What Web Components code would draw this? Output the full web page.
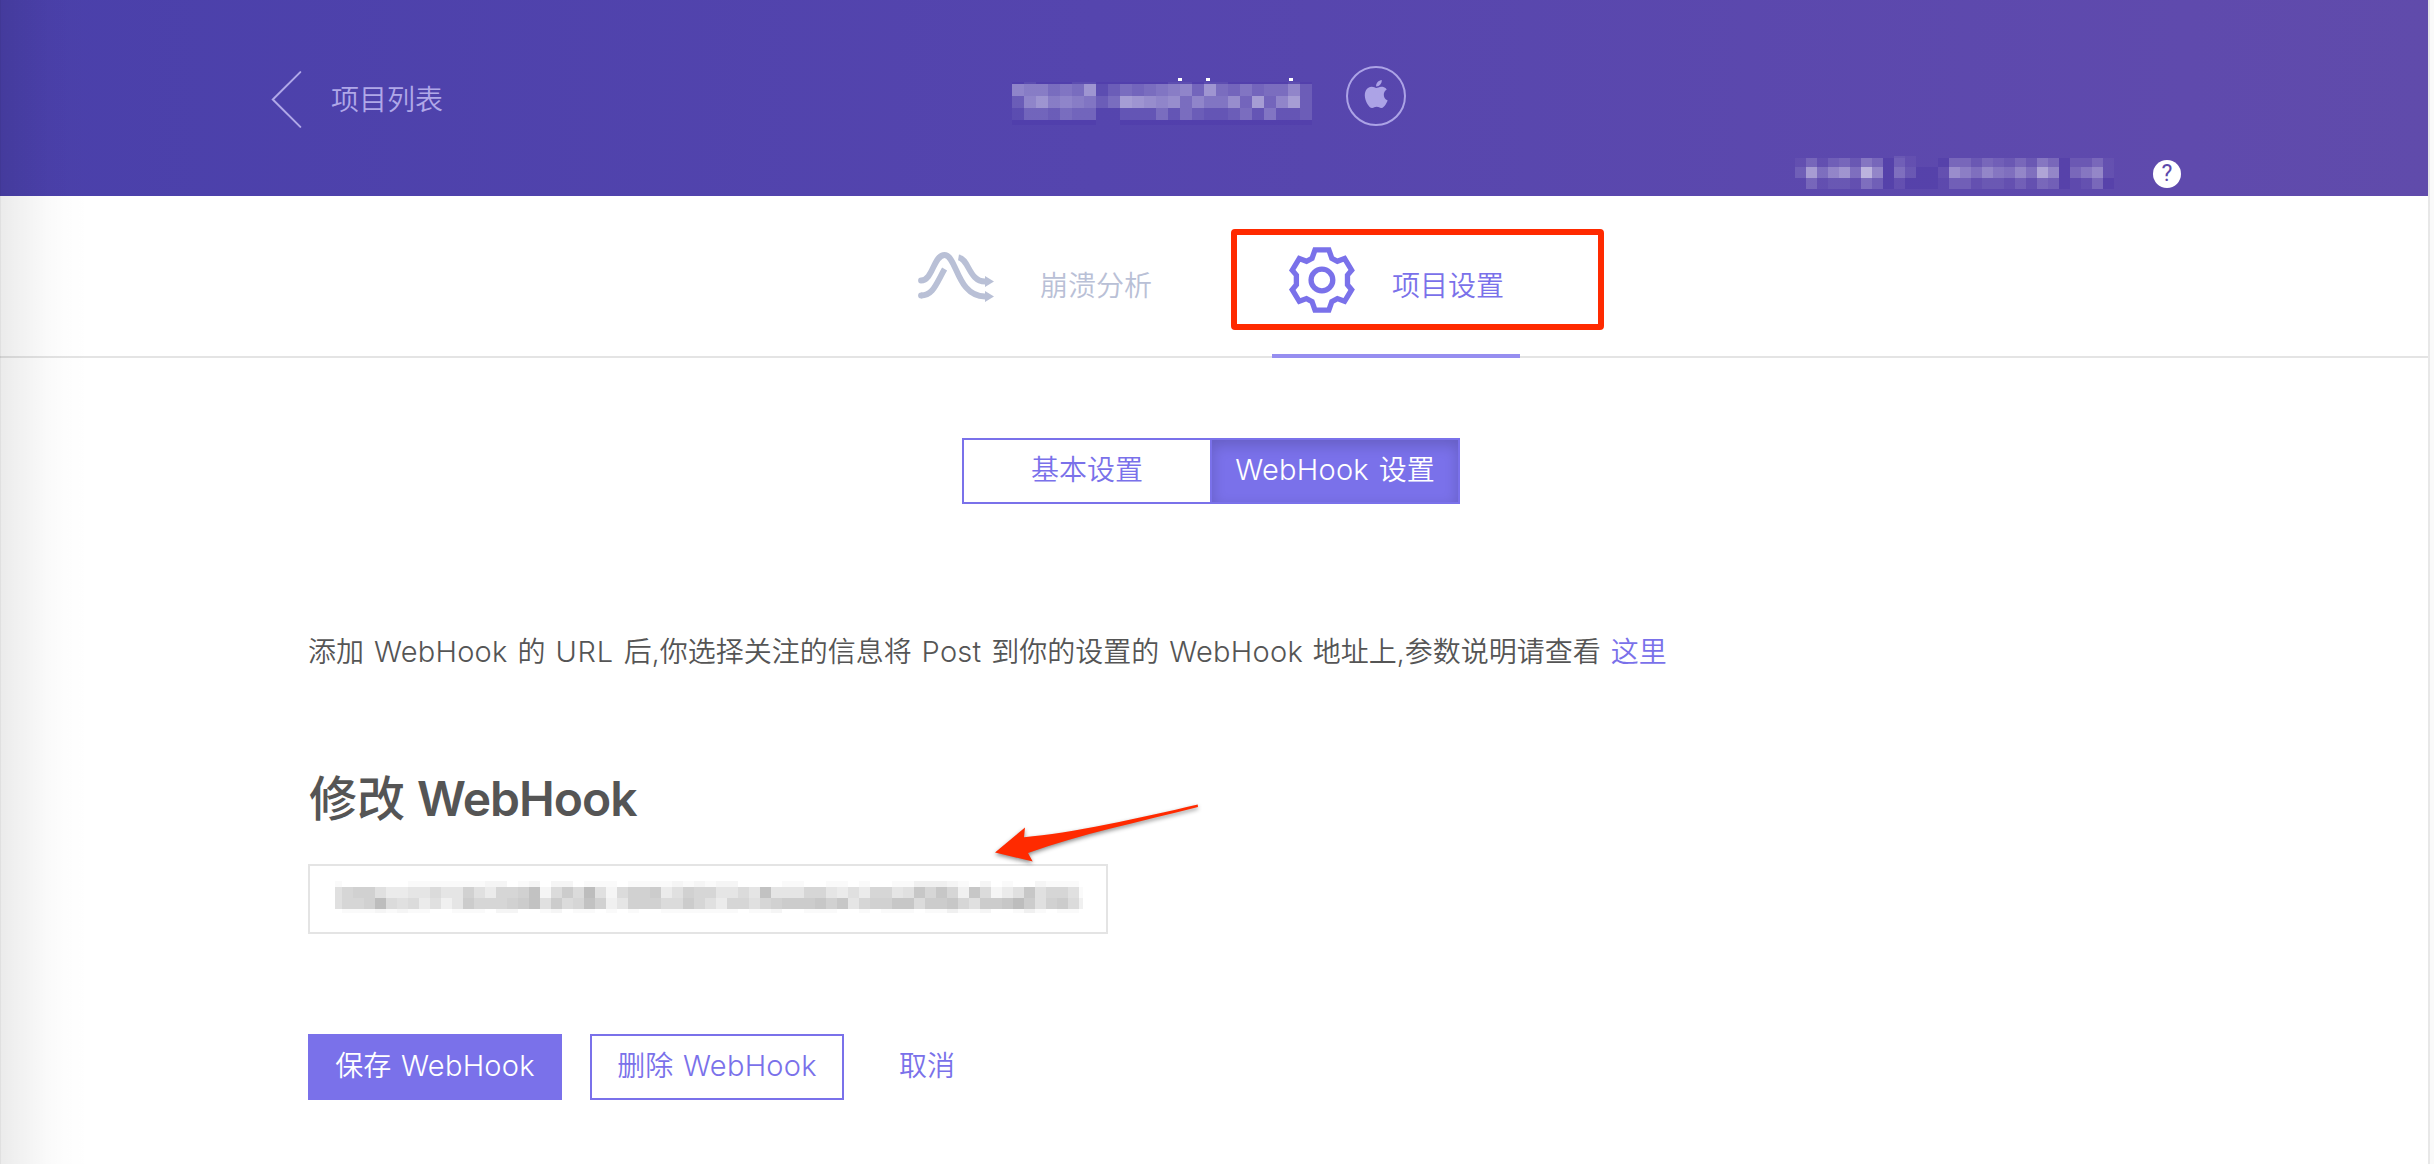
<!DOCTYPE html>
<html lang="zh-CN">
<head>
<meta charset="utf-8">
<title>WebHook 设置</title>
<style>
html,body{margin:0;height:100%;background:#fff}
body{overflow:hidden}
</style>
</head>
<body>
<settings-page></settings-page>
<script>
const define = (name, html, init) => {
  const t = document.createElement('template');
  t.innerHTML = html;
  customElements.define(name, class extends HTMLElement {
    constructor() {
      super();
      this.attachShadow({mode: 'open'}).append(t.content.cloneNode(true));
    }
    connectedCallback() { if (init) init(this, this.shadowRoot); }
  });
};

/* Redacted text: one digit per cell, base 16, "-" is a darker cell. */
const MOSAICS = {
  title: {count: 25, cols: 'repeat(25,12px)', rows: [2, 12, 12, 12, 5], ink: '255,255,255', step: .043, dark: .16, data: [
    '-1---11------11-11-----1-',
    '877565a135456784a54645583',
    '38a787635ba989586694b48b3',
    '1443544002225253223526223',
    '-------00----------------']},
  account: {count: 29, cols: 'repeat(29,11px)', rows: [2, 9, 11, 11], ink: '255,255,255', step: .042, dark: .22, data: [
    '00000000021000000000000000000',
    '14134264-3100-4424324264-2241',
    '3b58a5e8-52--197586585c8-4681',
    '04122153-1---03312213143-014-']},
  url: {count: 69, cols: '7px repeat(67,11px) 4px', rows: [6, 11, 11, 4], ink: '0,0,0', step: .02, dark: .2, data: [
    '100000011111112201202201110111121' + '212200001100110100113332102010021110',
    '689964455755964889c27a7d62799a469' + '885575c5558854648856b8b83b7246b68861',
    '6889d7674635a8889ac6a78c93599977a' + '86488689aaab9b5899bb7aab86aabda69a73',
    '011121211001110220012011010100111' + '111101120011100101110113112001310110']}
};
define('pixel-mosaic', `<style>:host{display:block;flex:none}#g{display:grid;width:max-content}</style><div id="g" aria-hidden="true"></div>`, (el, root) => {
  const m = MOSAICS[el.getAttribute('kind')], g = root.getElementById('g');
  g.style.gridTemplateColumns = m.cols;
  g.style.gridTemplateRows = m.rows.map(r => r + 'px').join(' ');
  for (const row of m.data) for (const c of row.padEnd(m.count, '1').slice(0, m.count)) {
    const d = document.createElement('i');
    d.style.background = c === '-' ? `rgba(65,40,160,${m.dark})` : `rgba(${m.ink},${parseInt(c, 16) * m.step})`;
    g.append(d);
  }
});

define('back-link', `<style>
:host{display:flex;align-items:center;color:#b0a8e8}
svg{flex:none;margin-right:28px}
span{line-height:40px}</style>
<svg width="32" height="58" viewBox="0 0 32 58" fill="none" stroke="#b0a8e8" stroke-width="2" stroke-linecap="round"><path d="M29.300 1.100 1.800 28.500 29.300 55.900"/></svg><span><slot></slot></span>`);

define('platform-badge', `<style>:host{display:block;width:60px;height:60px;flex:none}svg{display:block}</style>
<svg width="60" height="60" viewBox="0 0 60 60"><circle cx="30" cy="30" r="29" fill="none" stroke="#aca3e6" stroke-width="2"/><path transform="translate(16.2 14) scale(1.165)" fill="#aca3e6" d="M12.152 6.896c-.948 0-2.415-1.078-3.96-1.04-2.04.027-3.91 1.183-4.961 3.014-2.117 3.675-.546 9.103 1.519 12.09 1.013 1.454 2.208 3.09 3.792 3.039 1.52-.065 2.09-.987 3.935-.987 1.831 0 2.35.987 3.96.948 1.637-.026 2.676-1.48 3.676-2.948 1.156-1.688 1.636-3.325 1.662-3.415-.039-.013-3.182-1.221-3.22-4.857-.026-3.04 2.48-4.494 2.597-4.559-1.429-2.09-3.623-2.324-4.39-2.376-2-.156-3.675 1.09-4.61 1.09zM15.53 3.83c.843-1.012 1.4-2.427 1.245-3.83-1.207.052-2.662.805-3.532 1.818-.78.896-1.454 2.338-1.273 3.714 1.338.104 2.715-.688 3.559-1.701"/></svg>`);

define('help-badge', `<style>:host{display:flex;width:28px;height:28px;border-radius:50%;background:#fff;color:#5d49ac;font:400 23px/28px Roboto,sans-serif;justify-content:center;flex:none}</style><slot></slot>`);

define('app-header', `<style>
:host{display:grid;height:196px;grid-template-columns:1012px 1fr;grid-template-rows:150px 46px;background:linear-gradient(90deg,#4a40aa 0,#5545ae 45%,#5f4aad 90%,#604bab 100%)}
back-link{padding:71px 0 0 271px;align-self:start}
.title{display:flex;padding-top:66px}
.name{position:relative;padding-top:16px;width:334px}
.name i{position:absolute;top:12px;width:4px;height:3px;background:#fff}
.account{grid-column:1/-1;display:flex;justify-content:flex-end;padding:6px 247px 0 0;gap:39px}
help-badge{margin-top:4px}
</style>
<back-link>项目列表</back-link>
<div class="title"><div class="name"><pixel-mosaic kind="title"></pixel-mosaic><i style="left:166px"></i><i style="left:194px"></i><i style="left:277px"></i></div><platform-badge></platform-badge></div>
<div class="account"><pixel-mosaic kind="account"></pixel-mosaic><help-badge>?</help-badge></div>`);

define('nav-item', `<style>
:host{display:flex;width:248px;height:162px;box-sizing:border-box;color:#b9c0d6;align-items:flex-start;border-bottom:4px solid transparent}
:host([active]){color:#7a71ea;border-color:#968ef0}
div{height:66px;width:80px;margin-top:52px;display:flex;align-items:center}
span{line-height:40px;margin-top:70px}
</style><div><slot name="icon"></slot></div><span><slot></slot></span>`);

define('project-nav', `<style>
:host{display:flex;height:162px;box-shadow:inset 0 -2px #e4e4e4;padding-left:916px;box-sizing:border-box}
svg{display:block}
.second{margin-left:108px}
.second svg{margin-left:18px}
</style>
<nav-item><svg slot="icon" width="80" height="60" viewBox="0 3 80 60" fill="none" stroke="#b9c0d6" stroke-width="5.8" stroke-linecap="round"><path d="M5 32.500C17 32.500 17.500 7 28.500 7 41 7 40.500 48.500 69 48.500"/><path d="M5 47.500C17 47.500 20 36 28.600 21" stroke-linecap="butt"/><path d="M5 47.500h.1"/><path d="M42.500 9.300C53 11 53 33.500 69 33.500" stroke-linecap="butt"/><path stroke="none" fill="#b9c0d6" d="m69 28 9 5.500-9 5.500zM69 43l9 5.500-9 5.500z"/></svg><span style="margin-left:44px">崩溃分析</span></nav-item>
<nav-item active class="second"><svg slot="icon" width="66" height="66" viewBox="-30 -30 62 62" overflow="visible" fill="none" stroke="#7a71ea" stroke-width="5"><path d="M-6.500-28.300H6.500L9.300-20.300 14.500-17.500 21.300-20.100 27.900-9.200 24-4.500V4.500L27.900 9.200 21.300 20.100 14.500 17.500 9.300 20.300 6.500 28.300H-6.500L-9.300 20.300-14.500 17.500-21.300 20.100-27.900 9.200-24 4.500V-4.500L-27.900-9.200-21.300-20.100-14.500-17.500-9.300-20.300z"/><circle r="10.200" stroke-width="5"/></svg><span style="margin-left:40px">项目设置</span></nav-item>`);

define('tab-option', `<style>
:host{display:block;box-sizing:border-box;width:250px;height:66px;border:2px solid #7a71ea;color:#7a71ea;text-align:center;line-height:60px}
:host([active]){width:248px;border-left:0;color:#fff;background:#7a71ea;box-shadow:inset 0 5px 14px rgba(0,0,0,.17)}
</style><slot></slot>`);

define('ui-button', `<style>
:host{display:block;box-sizing:border-box;height:66px;width:254px;border:2px solid #7a71ea;color:#7a71ea;text-align:center;line-height:60px;white-space:nowrap}
:host([kind=primary]){background:#7a71ea;color:#fff}
:host([kind=text]){border-color:transparent;width:110px}
</style><slot></slot>`);

define('url-field', `<style>:host{display:block;box-sizing:border-box;width:800px;height:70px;border:2px solid #e4e4e4;background:#fff;padding:15px 25px}</style><slot></slot>`);

define('webhook-form', `<style>
:host{display:flex;flex-direction:column;align-items:flex-start;padding:80px 0 0 308px;color:#555;word-spacing:2px}
.tabs{display:flex;align-self:flex-start;margin-left:654px}
p{margin:128px 0 0;line-height:40px;height:40px;white-space:nowrap}
a{color:#7a71ea;text-decoration:none}
h1{margin:91px 0 0 1px;font-size:48px;line-height:72px;font-weight:600;white-space:nowrap;word-spacing:0}
h1 b{font-weight:500}
h1 span{letter-spacing:-1px}
url-field{margin-top:29px}
.actions{display:flex;margin-top:100px;gap:28px}
.l{font-size:29px;letter-spacing:.25px}
.u{font-size:29px;letter-spacing:.8px}
</style>
<div class="tabs"><tab-option>基本设置</tab-option><tab-option active><span class="l">WebHook</span> 设置</tab-option></div>
<p>添加 <span class="l">WebHook</span> 的 <span class="u">URL</span> 后,你选择关注的信息将 <span class="l">Post</span> 到你的设置的 <span class="l">WebHook</span> 地址上,参数说明请查看 <a>这里</a></p>
<h1><b>修改</b> <span>WebHook</span></h1>
<url-field><pixel-mosaic kind="url"></pixel-mosaic></url-field>
<div class="actions"><ui-button kind="primary">保存 <span class="l">WebHook</span></ui-button><ui-button>删除 <span class="l">WebHook</span></ui-button><ui-button kind="text">取消</ui-button></div>`);

define('callout-frame', `<style>:host{position:absolute;left:1231px;top:229px;width:373px;height:101px;box-sizing:border-box;border:6px solid #ff2a00;border-radius:4px}</style>`);
define('callout-arrow', `<style>:host{position:absolute;left:985px;top:795px}svg{display:block;filter:drop-shadow(0 2px 2px rgba(0,0,0,.45))}</style>
<svg width="225" height="75" viewBox="985 795 225 75"><path fill="#ff2a00" d="M995 852.500 1025 827.500 1024 837.200C1070 833.500 1140 818 1197.700 804.500L1198 807C1140 822 1080 834 1028 853L1032.700 861.500z"/></svg>`);

define('settings-page', `<style>
:host{display:block;position:relative;width:2434px;height:1164px;overflow:hidden;font:350 28px/40px Inter,"Noto Sans CJK SC",sans-serif;background:#fafafa}
main{width:2428px;height:1164px;background:#fff;border-right:2px solid #e8e8e8}
.edge{position:absolute;left:0;top:0;width:90px;height:100%;background:linear-gradient(90deg,rgba(0,0,0,.12) 0 1px,rgba(0,0,0,.08) 1px,rgba(0,0,0,.052) 22px,rgba(0,0,0,.02) 48px,rgba(0,0,0,.006) 66px,transparent 90px)}
</style>
<main><app-header></app-header><project-nav></project-nav><webhook-form></webhook-form></main>
<div class="edge"></div><callout-frame></callout-frame><callout-arrow></callout-arrow>`);
</script>
</body>
</html>
